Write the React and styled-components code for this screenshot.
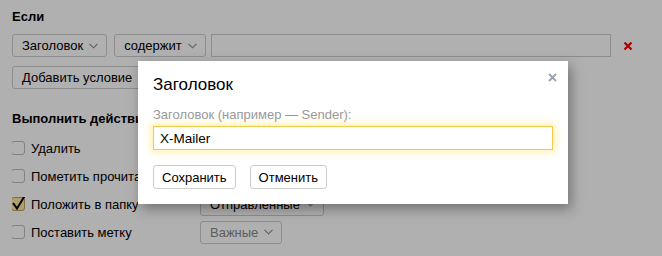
import styled, { createGlobalStyle } from "styled-components";

const Global = createGlobalStyle`
  html, body {
    margin: 0;
    padding: 0;
    background: #fff;
    font-family: "Liberation Sans", Arial, sans-serif;
    font-size: 13px;
    color: #000;
  }
`;

const Screen = styled.div`
  position: relative;
  width: 662px;
  height: 256px;
  overflow: hidden;
`;

const Page = styled.div`
  padding: 9px 12px;
`;

const Heading = styled.div`
  font-weight: bold;
  font-size: 13px;
  line-height: 16px;
  margin-top: ${(p) => p.$top || 0}px;
`;

const Row = styled.div`
  display: flex;
  align-items: center;
  gap: 7px;
  margin-top: 9px;
`;

const Select = styled.div`
  box-sizing: border-box;
  height: ${(p) => p.$h || 23}px;
  display: inline-flex;
  align-items: center;
  gap: 6px;
  padding: 0 8px 0 9px;
  border: 1px solid #ccc;
  border-radius: 3px;
  background: #fff;
  color: ${(p) => (p.$muted ? "#888" : "#000")};
  white-space: nowrap;
`;

const Chevron = () => (
  <svg width="9" height="6" viewBox="0 0 9 6">
    <polyline points="0.5,0.8 4.5,4.8 8.5,0.8" fill="none" stroke="#888" strokeWidth="1.1" />
  </svg>
);

const TextField = styled.div`
  box-sizing: border-box;
  width: 400px;
  height: 23px;
  border: 1px solid #ccc;
  background: #fff;
  margin-left: -2px;
`;

const Remove = styled.svg`
  margin-left: 5px;
`;

const Button = styled.div`
  box-sizing: border-box;
  display: inline-flex;
  align-items: center;
  height: 23px;
  padding: 0 9px;
  border: 1px solid #ccc;
  border-radius: 3px;
  background: #fff;
  white-space: nowrap;
`;

const AddWrap = styled.div`
  margin-top: 9px;
`;

const Actions = styled.div`
  margin-top: 7px;
`;

const ActionRow = styled.div`
  display: grid;
  grid-template-columns: 188px auto;
  align-items: center;
  height: 28px;
`;

const CheckLabel = styled.label`
  display: flex;
  align-items: center;
  gap: 6px;
  white-space: nowrap;
  overflow: hidden;
`;

const Box = styled.span`
  position: relative;
  flex: none;
  box-sizing: border-box;
  width: 14px;
  height: 14px;
  margin-left: -1px;
  border: 1px solid ${(p) => (p.$on ? "#b8a25a" : "#bbb")};
  border-radius: 3px;
  background: ${(p) => (p.$on ? "#fde9a0" : "#fff")};
`;

const Tick = styled.svg`
  position: absolute;
  left: 0px;
  top: -6px;
`;

const Dim = styled.div`
  position: absolute;
  inset: 0;
  background: rgba(0, 0, 0, 0.31);
`;

const Modal = styled.div`
  position: absolute;
  left: 138px;
  top: 61px;
  width: 430px;
  box-sizing: border-box;
  padding: 14px 15px 15px;
  background: #fff;
  box-shadow: 3px 5px 12px rgba(0, 0, 0, 0.35);
`;

const Title = styled.div`
  font-size: 17px;
  line-height: 20px;
`;

const Close = styled.svg`
  position: absolute;
  right: 11px;
  top: 12px;
`;

const FieldLabel = styled.div`
  margin-top: 12px;
  line-height: 16px;
  color: #999;
`;

const Input = styled.div`
  box-sizing: border-box;
  margin-top: 3px;
  height: 24px;
  display: flex;
  align-items: center;
  padding: 0 6px;
  font-size: 13.5px;
  border: 1px solid #f2c94c;
  box-shadow: 0 0 8px 2px rgba(255, 214, 0, 0.35);
`;

const Buttons = styled.div`
  display: flex;
  gap: 14px;
  margin-top: 15px;
`;

const ModalButton = styled(Button)`
  height: 24px;
  padding: 0 8px;
`;

const actions = [
  { label: "Удалить" },
  { label: "Пометить прочитанным" },
  { label: "Положить в папку", on: true, select: "Отправленные" },
  { label: "Поставить метку", select: "Важные", muted: true },
];

export default function App() {
  return (
    <Screen>
      <Global />
      <Page>
        <Heading>Если</Heading>
        <Row>
          <Select>
            Заголовок<Chevron />
          </Select>
          <Select>
            содержит<Chevron />
          </Select>
          <TextField />
          <Remove width="10" height="10" viewBox="0 0 10 10">
            <path d="M1.5 1.5L8.5 8.5M8.5 1.5L1.5 8.5" stroke="#f00" strokeWidth="2.2" />
          </Remove>
        </Row>
        <AddWrap>
          <Button>Добавить условие</Button>
        </AddWrap>
        <Heading $top={22}>Выполнить действие</Heading>
        <Actions>
          {actions.map((a) => (
            <ActionRow key={a.label}>
              <CheckLabel>
                <Box $on={a.on}>
                  {a.on && (
                    <Tick width="16" height="18" viewBox="0 0 16 18">
                      <polyline
                        points="1,11 5,16.5 14.5,1"
                        fill="none"
                        stroke="#000"
                        strokeWidth="2"
                      />
                    </Tick>
                  )}
                </Box>
                {a.label}
              </CheckLabel>
              {a.select ? (
                <div>
                  <Select $h={a.muted ? 23 : 24} $muted={a.muted}>
                    {a.select}<Chevron />
                  </Select>
                </div>
              ) : (
                <span />
              )}
            </ActionRow>
          ))}
        </Actions>
      </Page>
      <Dim />
      <Modal>
        <Title>Заголовок</Title>
        <Close width="9" height="9" viewBox="0 0 9 9">
          <path d="M1 1L8 8M8 1L1 8" stroke="#9aa3ad" strokeWidth="1.8" />
        </Close>
        <FieldLabel>Заголовок (например — Sender):</FieldLabel>
        <Input>X-Mailer</Input>
        <Buttons>
          <ModalButton>Сохранить</ModalButton>
          <ModalButton>Отменить</ModalButton>
        </Buttons>
      </Modal>
    </Screen>
  );
}
